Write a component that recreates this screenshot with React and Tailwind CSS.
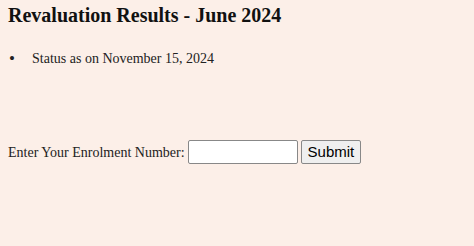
export default function App() {
  return (
    <div className="w-[474px] h-[246px] bg-[#fcefe8] overflow-hidden" style={{ fontFamily: '"Liberation Serif", serif' }}>
      <div className="pl-[8px] pt-[3px]">
        <h1 className="text-[20px] font-bold text-[#111] leading-[24px]">Revaluation Results - June 2024</h1>
        <ul className="mt-[23px] text-[14px] text-[#222] leading-[18px]">
          <li className="flex items-center">
            <span className="w-[24px] pl-[1px] text-[17px]">•</span>
            <span>Status as on November 15, 2024</span>
          </li>
        </ul>
        <div className="mt-[72px] flex items-center text-[14px] text-[#222]">
          <span>Enter Your Enrolment Number:</span>
          <input className="ml-[3px] w-[110px] h-[24px] bg-white border border-[#888] rounded-[2px]" />
          <button className="ml-[3px] h-[24px] px-[6px] bg-[#efefef] border border-[#888] rounded-[2px] text-[15px] text-black" style={{ fontFamily: '"Liberation Sans", Arial, sans-serif' }}>Submit</button>
        </div>
      </div>
    </div>
  );
}
